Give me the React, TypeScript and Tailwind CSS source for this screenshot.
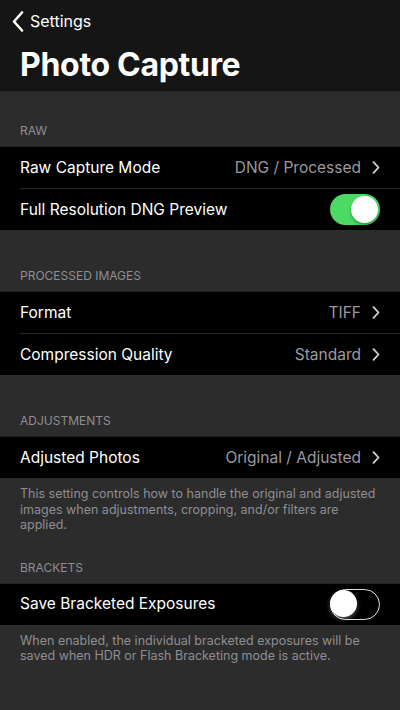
import React from "react";

const font = { fontFamily: "Inter, 'Liberation Sans', sans-serif" };

const Chevron = () => (
  <svg width="8" height="13" viewBox="0 0 8 13" className="ml-[11px] shrink-0">
    <polyline points="1.5,1.2 6.5,6.5 1.5,11.8" fill="none" stroke="#d4d4d8" strokeWidth="1.8" strokeLinecap="round" strokeLinejoin="round" />
  </svg>
);

const Toggle = ({ on }: { on: boolean }) =>
  on ? (
    <div className="w-[50px] h-[31px] rounded-full bg-[#4cd964] relative shrink-0">
      <div className="absolute right-[2px] top-[2px] w-[27px] h-[27px] rounded-full bg-white shadow-[0_2px_3px_rgba(0,0,0,0.3)]" />
    </div>
  ) : (
    <div className="w-[50px] h-[31px] rounded-full bg-black border-[1.5px] border-[#e0e0e0] relative shrink-0">
      <div className="absolute left-[-1px] top-[0.5px] w-[27px] h-[27px] rounded-full bg-white shadow-[0_2px_4px_rgba(255,255,255,0.35)]" />
    </div>
  );

type Row = { label: string; value?: string; toggle?: boolean };

const SectionHeader = ({ title, h }: { title: string; h: string }) => (
  <div className={`${h} flex items-end px-5 pb-[7px] text-[12px] leading-[16px] uppercase text-[#8e8e93]`}>
    {title}
  </div>
);

const Group = ({ rows }: { rows: Row[] }) => (
  <div className="bg-black border-t border-[#222]">
    {rows.map((r, i) => (
      <div key={r.label}>
        {i > 0 && <div className="ml-5 h-px bg-[#2a2a2a]" />}
        <div className="h-[41px] flex items-center pl-5 pr-5">
          <span className="text-white text-[15.5px] flex-1 truncate">{r.label}</span>
          {r.value !== undefined && (
            <div className="flex items-center">
              <span className="text-[#9a9a9f] text-[15.5px]">{r.value}</span>
              <Chevron />
            </div>
          )}
          {r.toggle !== undefined && <Toggle on={r.toggle} />}
        </div>
      </div>
    ))}
  </div>
);

const Footer = ({ text }: { text: string }) => (
  <div className="px-5 pt-[8px] text-[12.5px] leading-[15.5px] text-[#8e8e93]">{text}</div>
);

export default function App() {
  return (
    <div className="w-[400px] min-h-[710px] bg-[#2c2c2c]" style={font}>
      <div className="bg-[#151515] pb-[4px] border-b border-[#222]">
        <div className="h-[42px] flex items-center pl-[12px]">
          <svg width="12" height="21" viewBox="0 0 12 21">
            <polyline points="10,1.5 2,10.5 10,19.5" fill="none" stroke="#ffffff" strokeWidth="2.6" strokeLinecap="round" strokeLinejoin="round" />
          </svg>
          <span className="ml-[6px] text-white text-[16px]">Settings</span>
        </div>
        <div className="h-[45px] flex items-center px-5">
          <h1 className="text-white text-[32px] font-bold tracking-[-0.3px]">Photo Capture</h1>
        </div>
      </div>

      <SectionHeader title="Raw" h="h-[54px]" />
      <Group
        rows={[
          { label: "Raw Capture Mode", value: "DNG / Processed" },
          { label: "Full Resolution DNG Preview", toggle: true },
        ]}
      />

      <SectionHeader title="Processed Images" h="h-[61px]" />
      <Group
        rows={[
          { label: "Format", value: "TIFF" },
          { label: "Compression Quality", value: "Standard" },
        ]}
      />

      <SectionHeader title="Adjustments" h="h-[61px]" />
      <Group rows={[{ label: "Adjusted Photos", value: "Original / Adjusted" }]} />
      <Footer text="This setting controls how to handle the original and adjusted images when adjustments, cropping, and/or filters are applied." />

      <SectionHeader title="Brackets" h="h-[50px]" />
      <Group rows={[{ label: "Save Bracketed Exposures", toggle: false }]} />
      <Footer text="When enabled, the individual bracketed exposures will be saved when HDR or Flash Bracketing mode is active." />
    </div>
  );
}
